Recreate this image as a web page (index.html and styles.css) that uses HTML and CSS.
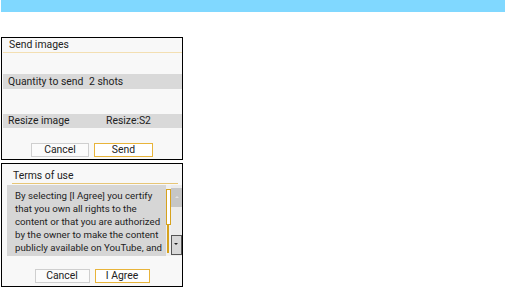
FILE: index.html
```html
<html>
<head>
<meta charset="utf-8">
<title>Send images</title>
<link rel="stylesheet" href="styles.css">
</head>
<body>
<div class="topbar"></div>

<div class="panel send">
	<div class="title">Send images</div>
	<div class="row qty"><span class="label">Quantity to send</span><span class="val">2 shots</span></div>
	<div class="row resize"><span class="label">Resize image</span><span class="val">Resize:S2</span></div>
	<div class="buttons">
		<span class="btn cancel">Cancel</span>
		<span class="btn sel">Send</span>
	</div>
</div>

<div class="panel terms">
	<div class="title">Terms of use</div>
	<div class="body">
		<div class="text">By selecting [I Agree] you certify<br>
			that you own all rights to the<br>
			content or that you are authorized<br>
			by the owner to make the content<br>
			publicly available on YouTube, and</div>
		<div class="track">
			<div class="thumb"></div>
			<div class="rail"></div>
		</div>
		<div class="arrows">
			<div class="up"></div>
			<div class="down"></div>
		</div>
	</div>
	<div class="buttons">
		<span class="btn cancel">Cancel</span>
		<span class="btn sel">I Agree</span>
	</div>
</div>
</body>
</html>
```

FILE: styles.css
```css
body{
	margin:0;
	background:#fff;
	color:#222;
	font:400 10.4px/14px Roboto,sans-serif;
}
*{box-sizing:border-box}

.topbar{
	height:12px;
	margin-left:1px;
	width:504px;
	background:#80d8ff;
}

.panel{
	width:182px;
	margin-left:1px;
	border:1px solid #000;
	background:#f8f8f8;
}
.send{
	margin-top:25px;
	height:123px;
	padding-bottom:2px;
}
.terms{
	margin-top:3px;
	height:124px;
}

.title{
	height:15px;
	margin-left:1px;
	padding-left:6px;
	border-bottom:1px solid #f3dfb2;
}
.terms .title{
	height:20px;
	padding-top:5px;
	margin:0 4px 0 10px;
	padding-left:1px;
	border-bottom-color:#e7c677;
}

.row{
	margin-left:1px;
	padding-left:5px;
	height:15px;
	line-height:15px;
	background:#d9d9d9;
}
.row .label{
	display:inline-block;
}
.qty{margin-top:21px}
.qty .label{width:81px}
.resize{margin-top:25px;height:14px;line-height:14px}
.resize .label{width:98px}

.buttons{
	display:flex;
	justify-content:center;
	gap:5px;
	margin-top:15px;
}
.btn{
	display:block;
	width:58px;
	height:14px;
	line-height:12px;
	text-align:center;
	background:#fbfbfb;
	border:1px solid #cfcfcf;
}
.btn.sel{
	width:59px;
	background:#fff;
	border-color:#e8b43a;
}
.terms .buttons{margin-top:13px}
.terms .btn{width:55px}

.body{
	display:flex;
	height:71px;
	margin-top:1px;
	margin-left:5px;
}
.text{
	width:159px;
	padding:4px 0 0 8px;
	font-size:9.7px;
	line-height:13px;
	white-space:nowrap;
	background:#d6d6d6;
	overflow:hidden;
}
.track{
	width:5px;
	padding-top:4px;
	background:#f0f0f0;
}
.thumb{
	height:36px;
	background:#fff;
	border:1px solid #d6a21e;
}
.rail{
	width:2px;
	height:28px;
	margin-left:1px;
	background:#d6a21e;
}
.arrows{
	width:11px;
	padding-top:3px;
	display:flex;
	flex-direction:column;
	justify-content:space-between;
	background:#ececec;
}
.up{
	height:19px;
	background:#c6c6c6;
	position:relative;
}
.up:after{
	content:'';
	position:absolute;
	left:4px;
	top:6px;
	border:2px solid transparent;
	border-bottom:2px solid #e2e2e2;
}
.down{
	height:20px;
	margin-bottom:1px;
	background:#d8d8d8;
	border:1px solid #555;
	position:relative;
}
.down:after{
	content:'';
	position:absolute;
	left:2px;
	top:7px;
	border:2px solid transparent;
	border-top:2px solid #222;
}
```
